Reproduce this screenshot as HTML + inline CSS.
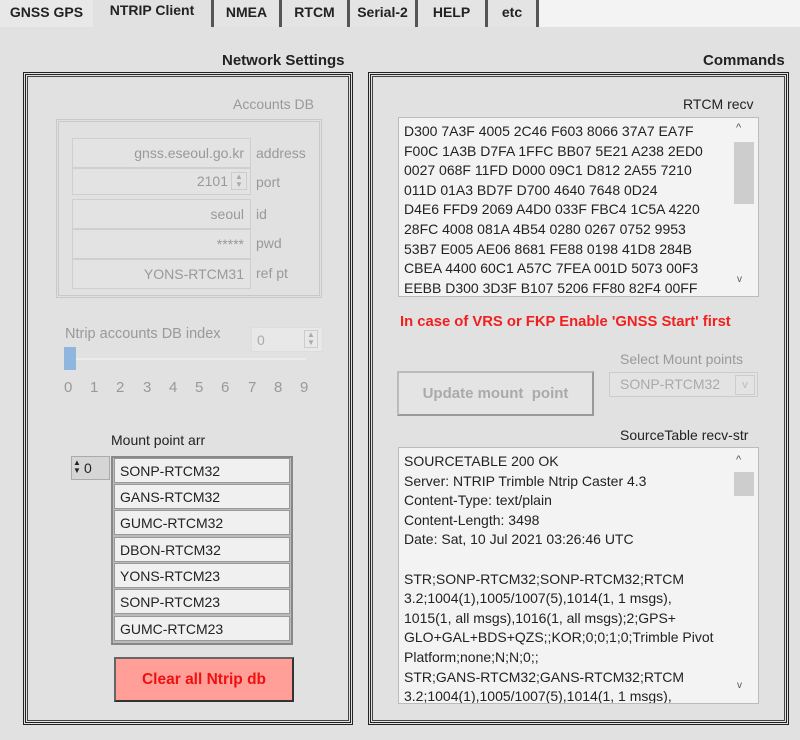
<!DOCTYPE html>
<html><head><style>
*{margin:0;padding:0;box-sizing:border-box}
body{width:800px;height:740px;background:#e1e1e1;font-family:"Liberation Sans",sans-serif;font-size:14px;color:#222;position:relative;overflow:hidden}
.a{position:absolute}
.tabbar{left:0;top:0;width:800px;height:27px;background:#f3f3f3}
.tab{top:0;height:27px;font-weight:bold;font-size:14px;line-height:25px;text-align:center;background:#e4e4e4;border-right:3px solid #555}
.panel{border:3px double #222;outline:1px solid #444;outline-offset:-5px}
.fld{background:#e3e3e3;border:1px solid #cfcfcf;color:#999;text-align:right;padding-right:6px;line-height:28px;font-size:14px}
.gl{color:#999}
.row{left:114px;width:176px;height:25px;background:#f0f0f0;border:1px solid #999;padding-left:5px;line-height:24px;font-size:14px}
.tb{background:#f3f3f3;border:1px solid #bbb;font-size:14px;line-height:19.6px;padding:4px 0 0 5px;white-space:pre;overflow:hidden}
</style></head><body>
<div class="a tabbar"></div>
<div class="a tab" style="left:0;width:93px;background:#e8e8e8;border-right:none">GNSS GPS</div>
<div class="a tab" style="left:93px;width:121px;background:#e1e1e1;line-height:20px">NTRIP Client</div>
<div class="a tab" style="left:214px;width:68px">NMEA</div>
<div class="a tab" style="left:282px;width:68px">RTCM</div>
<div class="a tab" style="left:350px;width:68px">Serial-2</div>
<div class="a tab" style="left:418px;width:70px">HELP</div>
<div class="a tab" style="left:488px;width:51px">etc</div>

<div class="a" style="left:222px;top:52px;font-weight:bold;font-size:15px">Network Settings</div>
<div class="a" style="left:703px;top:52px;font-weight:bold;font-size:15px">Commands</div>

<div class="a panel" style="left:23px;top:72px;width:330px;height:653px"></div>
<div class="a panel" style="left:368px;top:72px;width:421px;height:653px"></div>

<div class="a gl" style="left:233px;top:96px">Accounts DB</div>
<div class="a" style="left:56px;top:119px;width:266px;height:179px;border:3px double #c8c8c8"></div>
<div class="a fld" style="left:72px;top:138px;width:179px;height:30px">gnss.eseoul.go.kr</div>
<div class="a fld" style="left:72px;top:168px;width:179px;height:27px;line-height:24px;padding-right:22px">2101</div>
<div class="a" style="left:231px;top:172px;width:16px;height:18px;border:1px solid #ccc;color:#aaa;font-size:8px;line-height:8px;text-align:center">▲<br>▼</div>
<div class="a fld" style="left:72px;top:199px;width:179px;height:30px">seoul</div>
<div class="a fld" style="left:72px;top:229px;width:179px;height:30px">*****</div>
<div class="a fld" style="left:72px;top:259px;width:179px;height:30px">YONS-RTCM31</div>
<div class="a gl" style="left:256px;top:145px">address</div>
<div class="a gl" style="left:256px;top:174px">port</div>
<div class="a gl" style="left:256px;top:206px">id</div>
<div class="a gl" style="left:256px;top:235px">pwd</div>
<div class="a gl" style="left:256px;top:265px">ref pt</div>

<div class="a gl" style="left:65px;top:326px;font-size:14.5px">Ntrip accounts DB index</div>
<div class="a" style="left:251px;top:327px;width:72px;height:25px;background:#e8e8e8;border:1px solid #ddd;color:#aaa;padding-left:5px;line-height:24px">0</div>
<div class="a" style="left:304px;top:330px;width:14px;height:18px;border:1px solid #ccc;color:#aaa;font-size:8px;line-height:8px;text-align:center">▲<br>▼</div>
<div class="a" style="left:64px;top:358px;width:242px;height:2px;background:#ebebeb"></div>
<div class="a" style="left:64px;top:347px;width:12px;height:23px;background:#8fb6df"></div>
<div class="a gl" style="left:64px;top:379px;width:250px;font-size:15px">
<span class="a" style="left:0">0</span><span class="a" style="left:26px">1</span><span class="a" style="left:52px">2</span><span class="a" style="left:79px">3</span><span class="a" style="left:105px">4</span><span class="a" style="left:131px">5</span><span class="a" style="left:157px">6</span><span class="a" style="left:184px">7</span><span class="a" style="left:210px">8</span><span class="a" style="left:236px">9</span></div>

<div class="a" style="left:111px;top:432px">Mount point arr</div>
<div class="a" style="left:71px;top:456px;width:39px;height:24px;background:#d5d5d5;border:1px solid #aaa;line-height:22px;padding-left:12px">0</div>
<div class="a" style="left:73px;top:459px;font-size:8px;line-height:8px">▲<br>▼</div>
<div class="a" style="left:111px;top:456px;width:182px;height:189px;border:2px solid #888;background:#bbb"></div>
<div class="a row" style="top:458px">SONP-RTCM32</div>
<div class="a row" style="top:484px">GANS-RTCM32</div>
<div class="a row" style="top:510px">GUMC-RTCM32</div>
<div class="a row" style="top:537px">DBON-RTCM32</div>
<div class="a row" style="top:563px">YONS-RTCM23</div>
<div class="a row" style="top:589px">SONP-RTCM23</div>
<div class="a row" style="top:616px">GUMC-RTCM23</div>
<div class="a" style="left:114px;top:657px;width:180px;height:45px;background:#ff9f98;border:2px solid #333;border-top-color:#666;border-left-color:#666;color:#f01010;font-weight:bold;text-align:center;line-height:41px;font-size:15.5px">Clear all Ntrip db</div>

<div class="a" style="left:683px;top:96px">RTCM recv</div>
<div class="a tb" style="left:398px;top:117px;width:361px;height:180px">D300 7A3F 4005 2C46 F603 8066 37A7 EA7F
F00C 1A3B D7FA 1FFC BB07 5E21 A238 2ED0
0027 068F 11FD D000 09C1 D812 2A55 7210
011D 01A3 BD7F D700 4640 7648 0D24
D4E6 FFD9 2069 A4D0 033F FBC4 1C5A 4220
28FC 4008 081A 4B54 0280 0267 0752 9953
53B7 E005 AE06 8681 FE88 0198 41D8 284B
CBEA 4400 60C1 A57C 7FEA 001D 5073 00F3
EEBB D300 3D3F B107 5206 FF80 82F4 00FF</div>
<div class="a" style="left:736px;top:122px;font-size:11px;color:#555">^</div>
<div class="a" style="left:734px;top:142px;width:20px;height:62px;background:#cdcdcd"></div>
<div class="a" style="left:737px;top:274px;font-size:10px;color:#555">v</div>

<div class="a" style="left:400px;top:314px;color:#f02020;font-weight:bold;font-size:14.8px">In case of VRS or FKP Enable 'GNSS Start' first</div>
<div class="a gl" style="left:620px;top:351px">Select Mount points</div>
<div class="a" style="left:609px;top:372px;width:149px;height:25px;border:1px solid #ccc;background:#e3e3e3;color:#aaa;padding-left:10px;line-height:23px">SONP-RTCM32</div>
<div class="a" style="left:735px;top:375px;width:20px;height:20px;border:1px solid #ccc;color:#bbb;text-align:center;font-size:11px;line-height:18px">v</div>
<div class="a" style="left:397px;top:371px;width:197px;height:45px;border:2px solid #bbb;border-right-color:#999;border-bottom-color:#999;background:#e4e4e4;color:#aaa;font-weight:bold;text-align:center;line-height:41px;font-size:15px">Update mount&nbsp; point</div>

<div class="a" style="left:620px;top:427px">SourceTable recv-str</div>
<div class="a tb" style="left:398px;top:447px;width:361px;height:257px">SOURCETABLE 200 OK
Server: NTRIP Trimble Ntrip Caster 4.3
Content-Type: text/plain
Content-Length: 3498
Date: Sat, 10 Jul 2021 03:26:46 UTC

STR;SONP-RTCM32;SONP-RTCM32;RTCM
3.2;1004(1),1005/1007(5),1014(1, 1 msgs),
1015(1, all msgs),1016(1, all msgs);2;GPS+
GLO+GAL+BDS+QZS;;KOR;0;0;1;0;Trimble Pivot
Platform;none;N;N;0;;
STR;GANS-RTCM32;GANS-RTCM32;RTCM
3.2;1004(1),1005/1007(5),1014(1, 1 msgs),</div>
<div class="a" style="left:736px;top:454px;font-size:11px;color:#555">^</div>
<div class="a" style="left:734px;top:472px;width:20px;height:24px;background:#cdcdcd"></div>
<div class="a" style="left:737px;top:680px;font-size:10px;color:#555">v</div>
</body></html>
